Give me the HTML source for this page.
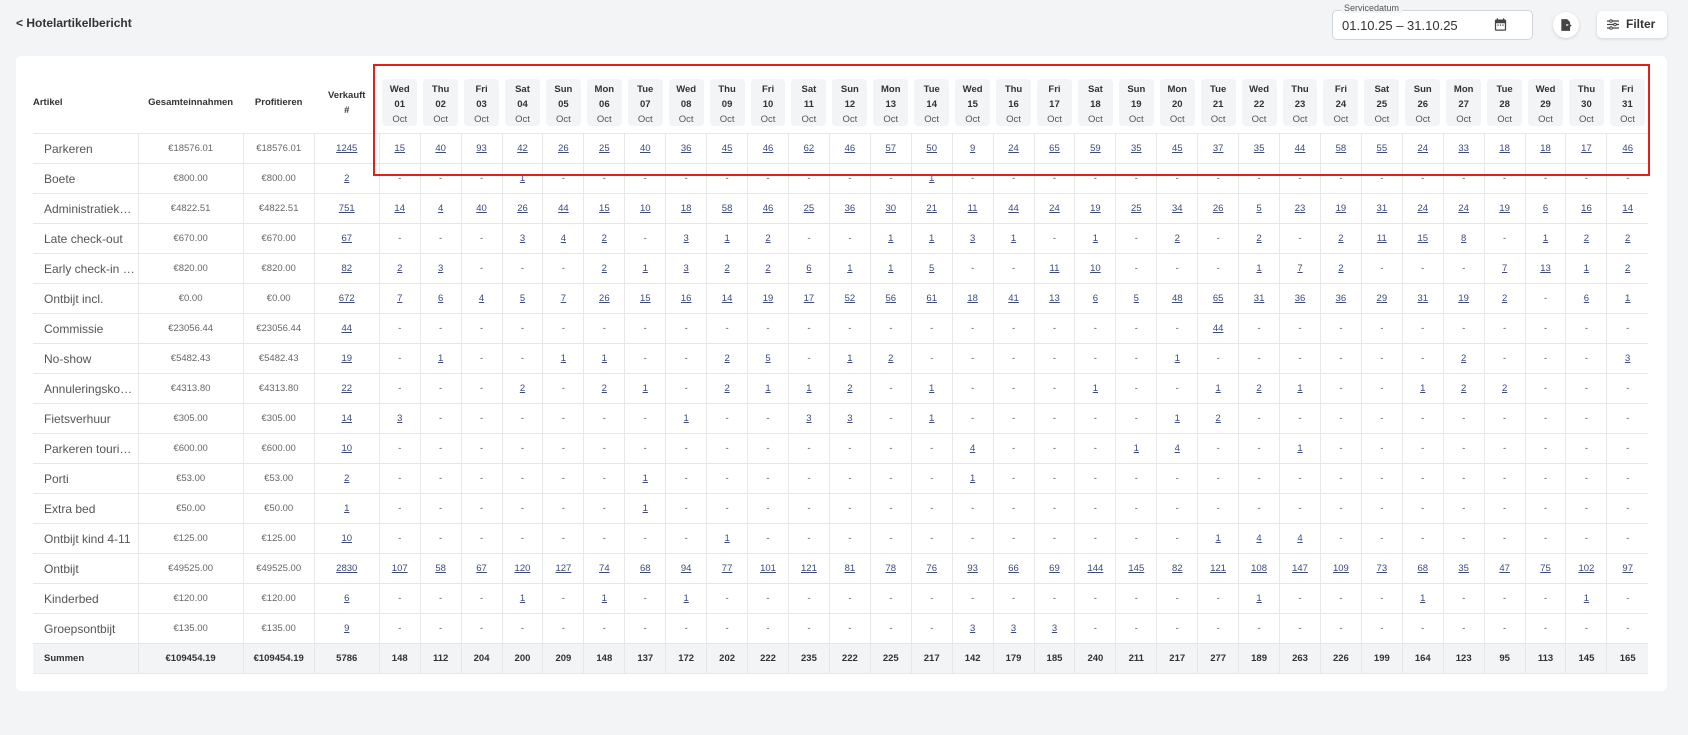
<!DOCTYPE html>
<html><head><meta charset="utf-8"><style>
body{margin:0;width:1688px;height:735px;background:#f3f4f6;font-family:"Liberation Sans",sans-serif;position:relative;overflow:hidden;color:#333}
.title{position:absolute;left:16px;top:16px;font-size:12px;font-weight:bold;color:#333}
.date{position:absolute;left:1332px;top:10px;width:199px;height:28px;border:1px solid #d1d5db;border-radius:5px;background:#fff}
.date .lbl{position:absolute;left:8px;top:-8px;background:#f3f4f6;padding:0 3px;font-size:9px;color:#555}
.date .v{position:absolute;left:9px;top:7px;font-size:13px;color:#333}
.exp{position:absolute;left:1553px;top:12px;width:26px;height:26px;border-radius:50%;background:#fff;box-shadow:0 1px 3px rgba(0,0,0,.15)}
.filt{position:absolute;left:1597px;top:11px;width:70px;height:27px;border-radius:5px;background:#fff;box-shadow:0 1px 3px rgba(0,0,0,.15);font-size:12px;font-weight:bold;color:#333}
.card{position:absolute;left:16px;top:56px;width:1651px;height:635px;background:#fff;border-radius:6px}
table{position:absolute;left:17px;top:16px;border-collapse:collapse;table-layout:fixed;width:1615px}
th{height:61px;font-size:9.5px;font-weight:bold;color:#333;padding:0;text-align:center}
th.l{text-align:left}
td{height:29px;border:1px solid #e5e7eb;font-size:9.5px;text-align:center;color:#555;padding:0;white-space:nowrap;overflow:hidden}
tr td:first-child{border-left:none;text-align:left;padding-left:11px;font-size:12px;color:#555;text-overflow:ellipsis}
tr td:last-child{border-right:none}
td u{color:#3b4a7a}
td.m{color:#666}
.p{display:block;margin:0 3px;background:#f3f4f6;border-radius:4px;height:47px;padding-top:3px;box-sizing:border-box;line-height:15px;font-size:9.5px}
.p i{font-style:normal;font-weight:normal;color:#555}
tr.s td{background:#f3f4f6;font-weight:bold;color:#333;font-size:9.5px}
tr.s td:first-child{font-size:9.5px;color:#333}
.red{position:absolute;left:373px;top:64px;width:1273px;height:108px;border:2px solid #e02020}
</style></head><body>
<div class="title">&lt; Hotelartikelbericht</div>
<div class="date"><span class="lbl">Servicedatum</span><span class="v">01.10.25 – 31.10.25</span>
<svg style="position:absolute;left:160px;top:6px" width="15" height="15" viewBox="0 0 24 24"><path fill="#444" d="M19 4h-1V2h-2v2H8V2H6v2H5a2 2 0 0 0-2 2v14a2 2 0 0 0 2 2h14a2 2 0 0 0 2-2V6a2 2 0 0 0-2-2zm0 16H5V10h14v10zM7 12h2v2H7zm4 0h2v2h-2zm4 0h2v2h-2z"/></svg></div>
<div class="exp"><svg style="position:absolute;left:6px;top:6px" width="14" height="14" viewBox="0 0 24 24"><path fill="#444" d="M4 2h10l5 5v4h-7v2h7v9H4z"/><path fill="#444" d="M16 9l6 4-6 4z"/></svg></div>
<div class="filt"><svg style="position:absolute;left:10px;top:8px" width="12" height="11" viewBox="0 0 12 11"><g stroke="#444" stroke-width="1.2"><path d="M0 2h12M0 5.5h12M0 9h12"/></g><g fill="#fff" stroke="#444"><circle cx="4" cy="2" r="1.3"/><circle cx="8" cy="5.5" r="1.3"/><circle cx="4" cy="9" r="1.3"/></g></svg><span style="position:absolute;left:29px;top:6px">Filter</span></div>
<div class="card">
<table>
<colgroup><col style="width:105px"><col style="width:105px"><col style="width:71px"><col style="width:65px"><col span="31" style="width:40.9px"></colgroup>
<tr><th class="l">Artikel</th><th>Gesamteinnahmen</th><th>Profitieren</th><th style="line-height:15px">Verkauft<br>#</th>
<th><span class="p">Wed<br>01<br><i>Oct</i></span></th><th><span class="p">Thu<br>02<br><i>Oct</i></span></th><th><span class="p">Fri<br>03<br><i>Oct</i></span></th><th><span class="p">Sat<br>04<br><i>Oct</i></span></th><th><span class="p">Sun<br>05<br><i>Oct</i></span></th><th><span class="p">Mon<br>06<br><i>Oct</i></span></th><th><span class="p">Tue<br>07<br><i>Oct</i></span></th><th><span class="p">Wed<br>08<br><i>Oct</i></span></th><th><span class="p">Thu<br>09<br><i>Oct</i></span></th><th><span class="p">Fri<br>10<br><i>Oct</i></span></th><th><span class="p">Sat<br>11<br><i>Oct</i></span></th><th><span class="p">Sun<br>12<br><i>Oct</i></span></th><th><span class="p">Mon<br>13<br><i>Oct</i></span></th><th><span class="p">Tue<br>14<br><i>Oct</i></span></th><th><span class="p">Wed<br>15<br><i>Oct</i></span></th><th><span class="p">Thu<br>16<br><i>Oct</i></span></th><th><span class="p">Fri<br>17<br><i>Oct</i></span></th><th><span class="p">Sat<br>18<br><i>Oct</i></span></th><th><span class="p">Sun<br>19<br><i>Oct</i></span></th><th><span class="p">Mon<br>20<br><i>Oct</i></span></th><th><span class="p">Tue<br>21<br><i>Oct</i></span></th><th><span class="p">Wed<br>22<br><i>Oct</i></span></th><th><span class="p">Thu<br>23<br><i>Oct</i></span></th><th><span class="p">Fri<br>24<br><i>Oct</i></span></th><th><span class="p">Sat<br>25<br><i>Oct</i></span></th><th><span class="p">Sun<br>26<br><i>Oct</i></span></th><th><span class="p">Mon<br>27<br><i>Oct</i></span></th><th><span class="p">Tue<br>28<br><i>Oct</i></span></th><th><span class="p">Wed<br>29<br><i>Oct</i></span></th><th><span class="p">Thu<br>30<br><i>Oct</i></span></th><th><span class="p">Fri<br>31<br><i>Oct</i></span></th></tr>
<tr><td>Parkeren</td><td class="m">€18576.01</td><td class="m">€18576.01</td><td><u>1245</u></td><td><u>15</u></td><td><u>40</u></td><td><u>93</u></td><td><u>42</u></td><td><u>26</u></td><td><u>25</u></td><td><u>40</u></td><td><u>36</u></td><td><u>45</u></td><td><u>46</u></td><td><u>62</u></td><td><u>46</u></td><td><u>57</u></td><td><u>50</u></td><td><u>9</u></td><td><u>24</u></td><td><u>65</u></td><td><u>59</u></td><td><u>35</u></td><td><u>45</u></td><td><u>37</u></td><td><u>35</u></td><td><u>44</u></td><td><u>58</u></td><td><u>55</u></td><td><u>24</u></td><td><u>33</u></td><td><u>18</u></td><td><u>18</u></td><td><u>17</u></td><td><u>46</u></td></tr>
<tr><td>Boete</td><td class="m">€800.00</td><td class="m">€800.00</td><td><u>2</u></td><td>-</td><td>-</td><td>-</td><td><u>1</u></td><td>-</td><td>-</td><td>-</td><td>-</td><td>-</td><td>-</td><td>-</td><td>-</td><td>-</td><td><u>1</u></td><td>-</td><td>-</td><td>-</td><td>-</td><td>-</td><td>-</td><td>-</td><td>-</td><td>-</td><td>-</td><td>-</td><td>-</td><td>-</td><td>-</td><td>-</td><td>-</td><td>-</td></tr>
<tr><td>Administratiekosten</td><td class="m">€4822.51</td><td class="m">€4822.51</td><td><u>751</u></td><td><u>14</u></td><td><u>4</u></td><td><u>40</u></td><td><u>26</u></td><td><u>44</u></td><td><u>15</u></td><td><u>10</u></td><td><u>18</u></td><td><u>58</u></td><td><u>46</u></td><td><u>25</u></td><td><u>36</u></td><td><u>30</u></td><td><u>21</u></td><td><u>11</u></td><td><u>44</u></td><td><u>24</u></td><td><u>19</u></td><td><u>25</u></td><td><u>34</u></td><td><u>26</u></td><td><u>5</u></td><td><u>23</u></td><td><u>19</u></td><td><u>31</u></td><td><u>24</u></td><td><u>24</u></td><td><u>19</u></td><td><u>6</u></td><td><u>16</u></td><td><u>14</u></td></tr>
<tr><td>Late check-out</td><td class="m">€670.00</td><td class="m">€670.00</td><td><u>67</u></td><td>-</td><td>-</td><td>-</td><td><u>3</u></td><td><u>4</u></td><td><u>2</u></td><td>-</td><td><u>3</u></td><td><u>1</u></td><td><u>2</u></td><td>-</td><td>-</td><td><u>1</u></td><td><u>1</u></td><td><u>3</u></td><td><u>1</u></td><td>-</td><td><u>1</u></td><td>-</td><td><u>2</u></td><td>-</td><td><u>2</u></td><td>-</td><td><u>2</u></td><td><u>11</u></td><td><u>15</u></td><td><u>8</u></td><td>-</td><td><u>1</u></td><td><u>2</u></td><td><u>2</u></td></tr>
<tr><td>Early check-in fee</td><td class="m">€820.00</td><td class="m">€820.00</td><td><u>82</u></td><td><u>2</u></td><td><u>3</u></td><td>-</td><td>-</td><td>-</td><td><u>2</u></td><td><u>1</u></td><td><u>3</u></td><td><u>2</u></td><td><u>2</u></td><td><u>6</u></td><td><u>1</u></td><td><u>1</u></td><td><u>5</u></td><td>-</td><td>-</td><td><u>11</u></td><td><u>10</u></td><td>-</td><td>-</td><td>-</td><td><u>1</u></td><td><u>7</u></td><td><u>2</u></td><td>-</td><td>-</td><td>-</td><td><u>7</u></td><td><u>13</u></td><td><u>1</u></td><td><u>2</u></td></tr>
<tr><td>Ontbijt incl.</td><td class="m">€0.00</td><td class="m">€0.00</td><td><u>672</u></td><td><u>7</u></td><td><u>6</u></td><td><u>4</u></td><td><u>5</u></td><td><u>7</u></td><td><u>26</u></td><td><u>15</u></td><td><u>16</u></td><td><u>14</u></td><td><u>19</u></td><td><u>17</u></td><td><u>52</u></td><td><u>56</u></td><td><u>61</u></td><td><u>18</u></td><td><u>41</u></td><td><u>13</u></td><td><u>6</u></td><td><u>5</u></td><td><u>48</u></td><td><u>65</u></td><td><u>31</u></td><td><u>36</u></td><td><u>36</u></td><td><u>29</u></td><td><u>31</u></td><td><u>19</u></td><td><u>2</u></td><td>-</td><td><u>6</u></td><td><u>1</u></td></tr>
<tr><td>Commissie</td><td class="m">€23056.44</td><td class="m">€23056.44</td><td><u>44</u></td><td>-</td><td>-</td><td>-</td><td>-</td><td>-</td><td>-</td><td>-</td><td>-</td><td>-</td><td>-</td><td>-</td><td>-</td><td>-</td><td>-</td><td>-</td><td>-</td><td>-</td><td>-</td><td>-</td><td>-</td><td><u>44</u></td><td>-</td><td>-</td><td>-</td><td>-</td><td>-</td><td>-</td><td>-</td><td>-</td><td>-</td><td>-</td></tr>
<tr><td>No-show</td><td class="m">€5482.43</td><td class="m">€5482.43</td><td><u>19</u></td><td>-</td><td><u>1</u></td><td>-</td><td>-</td><td><u>1</u></td><td><u>1</u></td><td>-</td><td>-</td><td><u>2</u></td><td><u>5</u></td><td>-</td><td><u>1</u></td><td><u>2</u></td><td>-</td><td>-</td><td>-</td><td>-</td><td>-</td><td>-</td><td><u>1</u></td><td>-</td><td>-</td><td>-</td><td>-</td><td>-</td><td>-</td><td><u>2</u></td><td>-</td><td>-</td><td>-</td><td><u>3</u></td></tr>
<tr><td>Annuleringskosten</td><td class="m">€4313.80</td><td class="m">€4313.80</td><td><u>22</u></td><td>-</td><td>-</td><td>-</td><td><u>2</u></td><td>-</td><td><u>2</u></td><td><u>1</u></td><td>-</td><td><u>2</u></td><td><u>1</u></td><td><u>1</u></td><td><u>2</u></td><td>-</td><td><u>1</u></td><td>-</td><td>-</td><td>-</td><td><u>1</u></td><td>-</td><td>-</td><td><u>1</u></td><td><u>2</u></td><td><u>1</u></td><td>-</td><td>-</td><td><u>1</u></td><td><u>2</u></td><td><u>2</u></td><td>-</td><td>-</td><td>-</td></tr>
<tr><td>Fietsverhuur</td><td class="m">€305.00</td><td class="m">€305.00</td><td><u>14</u></td><td><u>3</u></td><td>-</td><td>-</td><td>-</td><td>-</td><td>-</td><td>-</td><td><u>1</u></td><td>-</td><td>-</td><td><u>3</u></td><td><u>3</u></td><td>-</td><td><u>1</u></td><td>-</td><td>-</td><td>-</td><td>-</td><td>-</td><td><u>1</u></td><td><u>2</u></td><td>-</td><td>-</td><td>-</td><td>-</td><td>-</td><td>-</td><td>-</td><td>-</td><td>-</td><td>-</td></tr>
<tr><td>Parkeren touringcar</td><td class="m">€600.00</td><td class="m">€600.00</td><td><u>10</u></td><td>-</td><td>-</td><td>-</td><td>-</td><td>-</td><td>-</td><td>-</td><td>-</td><td>-</td><td>-</td><td>-</td><td>-</td><td>-</td><td>-</td><td><u>4</u></td><td>-</td><td>-</td><td>-</td><td><u>1</u></td><td><u>4</u></td><td>-</td><td>-</td><td><u>1</u></td><td>-</td><td>-</td><td>-</td><td>-</td><td>-</td><td>-</td><td>-</td><td>-</td></tr>
<tr><td>Porti</td><td class="m">€53.00</td><td class="m">€53.00</td><td><u>2</u></td><td>-</td><td>-</td><td>-</td><td>-</td><td>-</td><td>-</td><td><u>1</u></td><td>-</td><td>-</td><td>-</td><td>-</td><td>-</td><td>-</td><td>-</td><td><u>1</u></td><td>-</td><td>-</td><td>-</td><td>-</td><td>-</td><td>-</td><td>-</td><td>-</td><td>-</td><td>-</td><td>-</td><td>-</td><td>-</td><td>-</td><td>-</td><td>-</td></tr>
<tr><td>Extra bed</td><td class="m">€50.00</td><td class="m">€50.00</td><td><u>1</u></td><td>-</td><td>-</td><td>-</td><td>-</td><td>-</td><td>-</td><td><u>1</u></td><td>-</td><td>-</td><td>-</td><td>-</td><td>-</td><td>-</td><td>-</td><td>-</td><td>-</td><td>-</td><td>-</td><td>-</td><td>-</td><td>-</td><td>-</td><td>-</td><td>-</td><td>-</td><td>-</td><td>-</td><td>-</td><td>-</td><td>-</td><td>-</td></tr>
<tr><td>Ontbijt kind 4-11</td><td class="m">€125.00</td><td class="m">€125.00</td><td><u>10</u></td><td>-</td><td>-</td><td>-</td><td>-</td><td>-</td><td>-</td><td>-</td><td>-</td><td><u>1</u></td><td>-</td><td>-</td><td>-</td><td>-</td><td>-</td><td>-</td><td>-</td><td>-</td><td>-</td><td>-</td><td>-</td><td><u>1</u></td><td><u>4</u></td><td><u>4</u></td><td>-</td><td>-</td><td>-</td><td>-</td><td>-</td><td>-</td><td>-</td><td>-</td></tr>
<tr><td>Ontbijt</td><td class="m">€49525.00</td><td class="m">€49525.00</td><td><u>2830</u></td><td><u>107</u></td><td><u>58</u></td><td><u>67</u></td><td><u>120</u></td><td><u>127</u></td><td><u>74</u></td><td><u>68</u></td><td><u>94</u></td><td><u>77</u></td><td><u>101</u></td><td><u>121</u></td><td><u>81</u></td><td><u>78</u></td><td><u>76</u></td><td><u>93</u></td><td><u>66</u></td><td><u>69</u></td><td><u>144</u></td><td><u>145</u></td><td><u>82</u></td><td><u>121</u></td><td><u>108</u></td><td><u>147</u></td><td><u>109</u></td><td><u>73</u></td><td><u>68</u></td><td><u>35</u></td><td><u>47</u></td><td><u>75</u></td><td><u>102</u></td><td><u>97</u></td></tr>
<tr><td>Kinderbed</td><td class="m">€120.00</td><td class="m">€120.00</td><td><u>6</u></td><td>-</td><td>-</td><td>-</td><td><u>1</u></td><td>-</td><td><u>1</u></td><td>-</td><td><u>1</u></td><td>-</td><td>-</td><td>-</td><td>-</td><td>-</td><td>-</td><td>-</td><td>-</td><td>-</td><td>-</td><td>-</td><td>-</td><td>-</td><td><u>1</u></td><td>-</td><td>-</td><td>-</td><td><u>1</u></td><td>-</td><td>-</td><td>-</td><td><u>1</u></td><td>-</td></tr>
<tr><td>Groepsontbijt</td><td class="m">€135.00</td><td class="m">€135.00</td><td><u>9</u></td><td>-</td><td>-</td><td>-</td><td>-</td><td>-</td><td>-</td><td>-</td><td>-</td><td>-</td><td>-</td><td>-</td><td>-</td><td>-</td><td>-</td><td><u>3</u></td><td><u>3</u></td><td><u>3</u></td><td>-</td><td>-</td><td>-</td><td>-</td><td>-</td><td>-</td><td>-</td><td>-</td><td>-</td><td>-</td><td>-</td><td>-</td><td>-</td><td>-</td></tr>
<tr class="s"><td>Summen</td><td>€109454.19</td><td>€109454.19</td><td>5786</td><td>148</td><td>112</td><td>204</td><td>200</td><td>209</td><td>148</td><td>137</td><td>172</td><td>202</td><td>222</td><td>235</td><td>222</td><td>225</td><td>217</td><td>142</td><td>179</td><td>185</td><td>240</td><td>211</td><td>217</td><td>277</td><td>189</td><td>263</td><td>226</td><td>199</td><td>164</td><td>123</td><td>95</td><td>113</td><td>145</td><td>165</td></tr>
</table>
</div>
<div class="red"></div>
</body></html>
